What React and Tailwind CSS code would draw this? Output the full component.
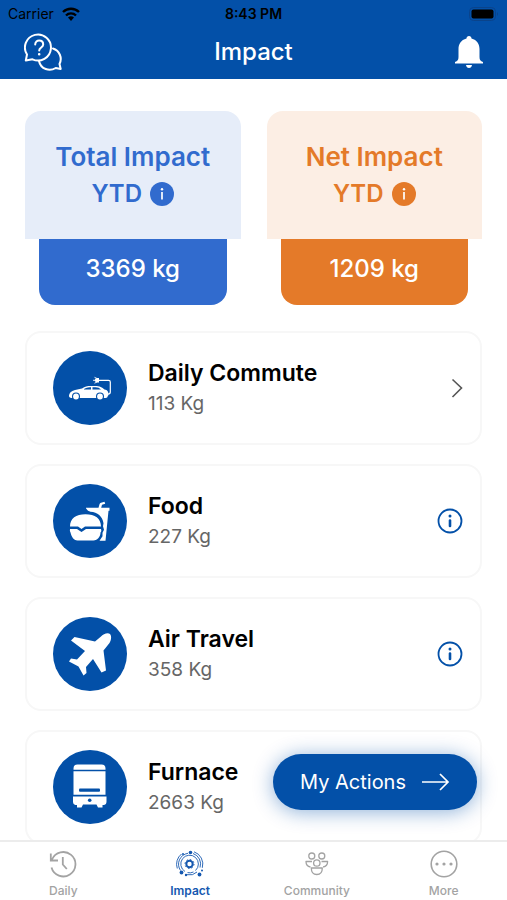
const CarIcon = () => (
  <svg viewBox="0 0 74 74" className="size-full" fill="none" aria-hidden="true">
    <path d="M16 45c0-3 2-5 6-6l7-1.500c3-2 5-2.500 9-2.500h4c5 0 7 1.500 9.500 3.500 3 .5 4 2 4 5.500l-1 1.500H16z" fill="#fff" />
    <path d="M31 38l2-1q2-.8 4-.8h1V38.500h-7zM39.500 36.200h3q3.500 0 5.500 2.300h-8.500z" fill="#0350a8" />
    <path d="M16 44.500h38.500q.5 2-1.500 2.500H18q-2-.5-2-2.500z" fill="#fff" />
    <circle cx="23" cy="45.500" r="4" fill="#0350a8" />
    <circle cx="47" cy="45.500" r="4" fill="#0350a8" />
    <circle cx="23" cy="45.500" r="2.900" fill="#fff" />
    <circle cx="47" cy="45.500" r="2.900" fill="#fff" />
    <path d="M46 29.300h9.500q1.800 0 1.800 1.800v10q0 2-2.300 2" stroke="#fff" strokeWidth="1.200" />
    <path d="M46 27v4.600h-2.200q-2-.5-2-2.300t2-2.300z" fill="#fff" />
    <path d="M44 27.500l-2.500-1.200M44 31l-2.500 1.200M42 29.300h-2" stroke="#fff" strokeWidth=".9" />
  </svg>
);

const FoodIcon = () => (
  <svg viewBox="0 0 74 74" className="size-full" fill="#fff" aria-hidden="true">
    <path d="M17 42.500c0-8 6-12.200 15.500-12.200S48 34.500 48 42.500H32l-3.500 2.500-3.500-2.500z" />
    <path d="M17 45h7l4.500 3 4.500-3h15q1 2-.5 3.500c0 4-3 8-7 8h-16c-4 0-6-4-7-8q-1-1.500-.5-3.500z" />
    <path d="M33 23.700h12.500l1-3.500q.3-1.200 1.500-1.500l3.500-1 .7 2-3.200 1-.8 3h8.300v3h-1l-3 30h-6l3-4.500v-3.500l1.500-3-1-3.500.5-3c-1-7-6-11-13-11.500-1.500-.3-3.500-1.500-4.500-3.500z" />
  </svg>
);

const PlaneIcon = () => (
  <svg viewBox="0 0 74 74" className="size-full" fill="#fff" aria-hidden="true">
    <path d="M57 17c-2.500-2-7 .5-9 2.500l-6 5L21.500 20 18 23.500 32 34l-8 8.500-6-1-2 3 9.500 5 5 9 3-2.500-.5-6 7-8 8.500 13.500 4.500-2-2.500-20 6-7.500c1.500-2 2.500-7 .5-9z" />
  </svg>
);

const FurnaceIcon = () => (
  <svg viewBox="0 0 74 74" className="size-full" fill="#fff" aria-hidden="true">
    <path d="M20.500 18.500q0-4 4-4h24q4 0 4 4v1.300h-32zM20.500 21.300h32v23.500h-32zM20 46.500h33.500v5q0 3-2.500 3.500h-1.500v2.500H45L43.500 54.500h-13.500L28.500 57.500H24V55h-1.500q-2.500-.5-2.500-3.500z" />
    <rect x="26" y="38.500" width="21" height="3.200" rx="1" fill="#0350a8" />
    <circle cx="36.700" cy="50.300" r="1.800" fill="#0350a8" />
  </svg>
);

const InfoIcon = () => (
  <svg viewBox="0 0 26 26" className="size-[26px]" fill="none" stroke="#0350a8" strokeLinecap="round" aria-hidden="true">
    <circle cx="13" cy="13" r="11.500" strokeWidth="1.800" />
    <path d="M13 12.500v5.500" strokeWidth="2.600" />
    <circle cx="13" cy="8" r="1.500" fill="#0350a8" stroke="none" />
  </svg>
);

const ChevronIcon = () => (
  <svg viewBox="0 0 26 26" className="size-[26px]" fill="none" stroke="#555" strokeWidth="1.600" aria-hidden="true">
    <path d="M15.500 4.500l9 8.500-9 9" />
  </svg>
);

const ChatIcon = () => (
  <svg viewBox="0 0 38 38" className="size-[38px]" fill="none" stroke="#fff" strokeWidth="2" strokeLinejoin="round" strokeLinecap="round" aria-hidden="true">
    <path d="M1.800 27.500l1.200-6A13 13 0 1 1 8.500 26.300z" />
    <path d="M29 15.500a11 11 0 0 1 6.500 15.500l1.200 5-5-1c-6 3.500-15 1.500-16.700-7" />
    <path d="M11.200 11.500c0-5.500 8-5 8 0 0 3-4 3-4 6" />
    <circle cx="15.200" cy="21.300" r=".7" fill="#fff" strokeWidth="1.200" />
  </svg>
);

const BellIcon = () => (
  <svg viewBox="0 0 28 34" className="h-[34px] w-7" fill="#fff" aria-hidden="true">
    <path d="M14 1c-1.500 0-2.500 1-2.500 2.500C6 5 3.500 9 3.500 14v8c0 3-1 4-3.500 5v1.500h28V27c-2.500-1-3.500-2-3.500-5v-8c0-5-2.500-9-8-10.500C16.500 2 15.500 1 14 1zM11 30h6q-.5 3-3 3T11 30z" />
  </svg>
);

const BadgeIcon = () => (
  <svg viewBox="0 0 24 24" className="size-6" fill="none" stroke="#fff" aria-hidden="true">
    <path d="M12 10v7.500" strokeWidth="1.700" />
    <circle cx="12" cy="7.200" r="1.200" fill="#fff" stroke="none" />
  </svg>
);

const HistoryIcon = () => (
  <svg viewBox="0 0 28 28" className="size-7 shrink-0" fill="none" stroke="currentColor" strokeWidth="1.800" aria-hidden="true">
    <path d="M3 9.500A12.200 12.200 0 1 1 2.500 17.500M1.800 3.500v7H9M13.800 7v7.500l4 4.500" />
  </svg>
);

const OrbitIcon = () => (
  <svg viewBox="0 0 28 28" className="size-7 shrink-0" fill="none" stroke="currentColor" aria-hidden="true">
    <circle cx="13.500" cy="14" r="3.200" strokeWidth="2" />
    <circle cx="13.500" cy="14" r="4.500" strokeWidth="1" strokeDasharray="1.500 2" />
    <path d="M9 21.500a8.800 8.800 0 1 1 10.500-1M11.500 22.600a8.800 8.800 0 0 0 6-.6" strokeWidth=".9" />
    <path d="M4.500 20.500a11 11 0 0 1 7.500-17.200M17 3.500a11 11 0 0 1 7 14M11 24.700a11 11 0 0 0 10-2.700M1.300 18.500A13 13 0 0 1 5.500 4M18 1.800a13 13 0 0 1 8.300 16" strokeWidth=".9" />
    <g fill="currentColor" stroke="none">
      <circle cx="14.500" cy="2.500" r="1.800" />
      <circle cx="5.500" cy="22.500" r="1.900" />
      <circle cx="23.500" cy="24.500" r="1.900" />
      <circle cx="10" cy="25" r="1.200" />
      <circle cx="26" cy="20.500" r="1" />
      <circle cx="7" cy="4" r="1" />
    </g>
  </svg>
);

const CommunityIcon = () => (
  <svg viewBox="0 0 28 28" className="size-7 shrink-0" fill="none" stroke="currentColor" strokeWidth="1.300" strokeLinejoin="round" aria-hidden="true">
    <circle cx="8.800" cy="6" r="3" />
    <circle cx="18.800" cy="6" r="3" />
    <circle cx="13.800" cy="13" r="3.200" />
    <path d="M9 11.500H3c0 3 1.500 5 4.500 5.500M18.500 11.500H24.600c0 3-1.500 5-4.500 5.500M8.300 18h11c0 4-2 6.500-5.500 6.500S8.300 22 8.300 18z" />
  </svg>
);

const MoreIcon = () => (
  <svg viewBox="0 0 28 28" className="size-7 shrink-0" fill="none" stroke="currentColor" strokeWidth="1.600" aria-hidden="true">
    <circle cx="14" cy="14" r="12.800" />
    <g fill="currentColor" stroke="none">
      <circle cx="7" cy="14" r="1.600" />
      <circle cx="14" cy="14" r="1.600" />
      <circle cx="21" cy="14" r="1.600" />
    </g>
  </svg>
);

const summaries = [
  { title: "Total Impact", value: "3369 kg", top: "bg-[#e6edf9] text-[#316bce]", bottom: "bg-[#316bce]", badge: "bg-[#316bce]" },
  { title: "Net Impact", value: "1209 kg", top: "bg-[#fceee4] text-[#e47a29]", bottom: "bg-[#e47a29]", badge: "bg-[#e47a29]" },
];

const categories = [
  { name: "Daily Commute", amount: "113 Kg", icon: CarIcon, action: ChevronIcon, label: "Open Daily Commute" },
  { name: "Food", amount: "227 Kg", icon: FoodIcon, action: InfoIcon, label: "About Food" },
  { name: "Air Travel", amount: "358 Kg", icon: PlaneIcon, action: InfoIcon, label: "About Air Travel" },
  { name: "Furnace", amount: "2663 Kg", icon: FurnaceIcon, action: InfoIcon, label: "About Furnace" },
];

const tabs = [
  { name: "Daily", icon: HistoryIcon },
  { name: "Impact", icon: OrbitIcon, active: true },
  { name: "Community", icon: CommunityIcon },
  { name: "More", icon: MoreIcon },
];

const StatusBar = () => (
  <div className="grid h-7 grid-cols-3 items-center px-2 text-sm text-black">
    <div className="flex items-center gap-2">
      <span>Carrier</span>
      <svg viewBox="0 0 18 14" className="h-[14px] w-[18px]" fill="none" stroke="#000" strokeWidth="2.400" aria-hidden="true">
        <path d="M1 5a11.500 11.500 0 0 1 16 0M4 8.500a7 7 0 0 1 10 0" />
        <path d="M6 10.500q3-2.500 6 0L9 14z" fill="#000" stroke="none" />
      </svg>
    </div>
    <span className="text-center font-semibold">8:43 PM</span>
    <svg viewBox="0 0 30 14" className="h-[14px] w-[30px] justify-self-end" aria-hidden="true">
      <rect x=".5" y=".5" width="26" height="13" rx="4" fill="none" stroke="#0a438a" />
      <rect x="2.500" y="2.500" width="22" height="9" rx="2" />
      <path d="M28 5q2 2 0 4z" fill="#0a438a" />
    </svg>
  </div>
);

const SummaryCard = ({ item }) => (
  <section className="flex-1">
    <div className={`flex h-32 flex-col items-center justify-center rounded-t-2xl text-[26px] leading-[37px] font-semibold ${item.top}`}>
      <h2>{item.title}</h2>
      <div className="flex items-center gap-2 text-2xl leading-[37px]">
        <span>YTD</span>
        <button type="button" aria-label={`About ${item.title}`} className={`rounded-full ${item.badge}`}>
          <BadgeIcon />
        </button>
      </div>
    </div>
    <p className={`mx-[14px] flex h-[66px] items-center justify-center rounded-b-2xl pb-[6px] text-2xl font-medium text-white ${item.bottom}`}>
      {item.value}
    </p>
  </section>
);

const CategoryCard = ({ item }) => (
  <li className="flex items-center rounded-2xl border-2 border-[#f7f7f7] bg-white py-[18px] pr-[17px] pl-[26px]">
    <div className="size-[74px] shrink-0 rounded-full bg-[#0350a8]">
      <item.icon />
    </div>
    <div className="ml-[21px] flex-1">
      <h3 className="text-[23px] leading-8 font-semibold text-black">{item.name}</h3>
      <p className="text-[19px] leading-[30px] text-[#666]">{item.amount}</p>
    </div>
    <button type="button" aria-label={item.label}>
      <item.action />
    </button>
  </li>
);

export default function App() {
  return (
    <div className="flex h-screen flex-col bg-white font-['Inter','Liberation_Sans',sans-serif]">
      <header className="bg-[#0350a8]">
        <StatusBar />
        <div className="flex h-[51px] items-center justify-between px-6 text-white">
          <button type="button" aria-label="Help" className="pb-1">
            <ChatIcon />
          </button>
          <h1 className="pb-1 text-2xl leading-8 font-medium">Impact</h1>
          <button type="button" aria-label="Notifications" className="flex w-[38px] justify-end pb-1">
            <BellIcon />
          </button>
        </div>
      </header>

      <div className="relative min-h-0 flex-1">
        <main className="h-full overflow-y-auto px-[25px] pt-8 [scrollbar-width:none]">
          <div className="flex gap-[26px]">
            {summaries.map((item) => (
              <SummaryCard key={item.title} item={item} />
            ))}
          </div>
          <ul className="mt-[26px] flex flex-col gap-[19px]">
            {categories.map((item) => (
              <CategoryCard key={item.name} item={item} />
            ))}
          </ul>
        </main>
        <button
          type="button"
          className="absolute right-[30px] bottom-[30px] flex h-14 items-center gap-4 rounded-full bg-[#0350a8] px-[27px] text-xl text-white shadow-[0_2px_20px_rgba(3,80,168,0.45)]"
        >
          My Actions
          <svg viewBox="0 0 28 18" className="h-[18px] w-7" fill="none" stroke="#fff" strokeWidth="1.700" aria-hidden="true">
            <path d="M0 9h26M18 1l8 8-8 8" />
          </svg>
        </button>
      </div>

      <nav className="relative flex h-[60px] border-t-2 border-[#ececec] bg-white">
        {tabs.map((tab) => (
          <a
            key={tab.name}
            href={`#${tab.name.toLowerCase()}`}
            aria-current={tab.active ? "page" : undefined}
            className={`flex flex-1 flex-col items-center gap-1 pt-2 text-xs leading-[18px] ${tab.active ? "font-semibold text-[#1558b0]" : "font-medium text-[#a3a3a3]"}`}
          >
            <tab.icon />
            {tab.name}
          </a>
        ))}
      </nav>
    </div>
  );
}
